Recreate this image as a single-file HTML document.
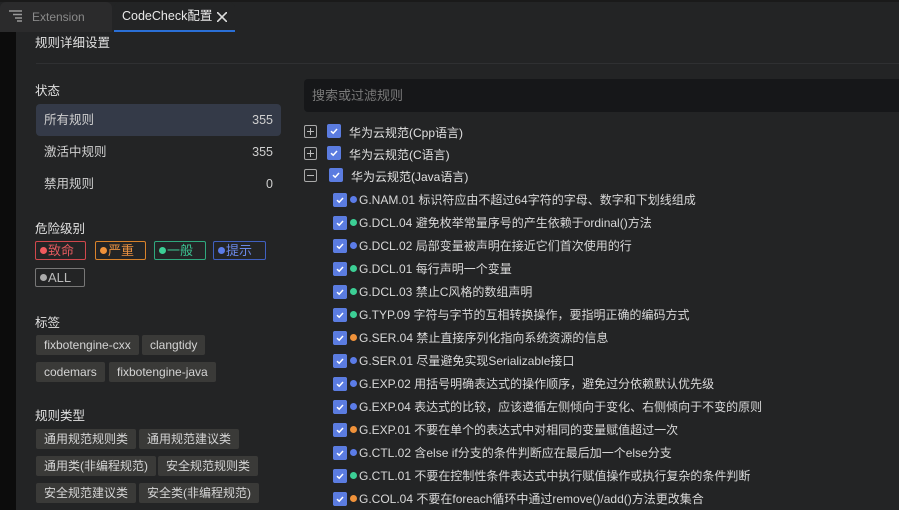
<!DOCTYPE html>
<html><head><meta charset="utf-8"><style>
*{box-sizing:border-box;margin:0;padding:0}
body{width:899px;height:510px;overflow:hidden;background:#232425;font-family:"Liberation Sans","Noto Sans CJK SC",sans-serif;color:#d4d4d4;position:relative}
.abs{position:absolute}
.tabbar{left:0;top:0;width:899px;height:33px;background:#232425;border-top:2px solid #1a1a1a}
.tab1{left:0;top:2px;width:112px;height:30px;background:#2b2b2c;border-radius:6px 6px 0 0;color:#8a8a8a;font-size:12px;line-height:30px;padding-left:32px}
.tab2{left:114px;top:2px;width:121px;height:30px;background:#232425;border-radius:6px 6px 0 0;color:#e8e8e8;font-size:12.5px;line-height:28px;padding-left:8px;border-bottom:2px solid #2a6fd6}
.strip{left:0;top:32px;width:16px;height:478px;background:#0c0c0c}
.sec{font-size:12.5px;color:#e0e0e0}
.item{left:36px;width:245px;height:32px;font-size:12.5px;line-height:32px;padding:0 8px;color:#cfcfcf}
.item span{float:right}
.sev{height:19px;border:1px solid;border-radius:2px;font-size:13px;line-height:17px;padding:0 4px;top:241px;white-space:nowrap}
.sev i{display:inline-block;width:7px;height:7px;border-radius:50%;margin-right:1px;vertical-align:1px}
.tag{height:20px;background:#3a3a38;border-radius:2px;font-size:12px;line-height:20px;padding:0 8px;color:#d4d4d4}
.cb{width:14px;height:14px;background:#5b7ce0;border-radius:2px;display:block}
.pm{width:13px;height:13px;border:1px solid #aaa;border-radius:2px}
.pm::before{content:"";position:absolute;left:2px;top:5px;width:7px;height:1px;background:#bbb}
.pm.p::after{content:"";position:absolute;left:5px;top:2px;width:1px;height:7px;background:#bbb}
.g{font-size:12px;color:#e0e0e0}
.r{font-size:12px;color:#d8d8d8;left:333px;height:18px;line-height:18px;white-space:nowrap}
.r .cb{display:inline-block;vertical-align:-3px}
.r .d{display:inline-block;width:7px;height:7px;border-radius:50%;margin:0 2px 0 3px;vertical-align:1px}
</style></head><body>
<svg width="0" height="0" style="position:absolute"><defs><symbol id="ck" viewBox="0 0 14 14"><rect width="14" height="14" rx="2" fill="#5b7ce0"/><path d="M4 7.2 L6.2 9.2 L10 5" fill="none" stroke="#fff" stroke-width="1.5"/></symbol></defs></svg>
<div class="abs tabbar"></div>
<div class="abs tab1">Extension</div>
<svg class="abs" style="left:9px;top:10px" width="14" height="12"><g stroke="#9a9a9a" stroke-width="1.5"><line x1="0" y1="1" x2="13" y2="1"/><line x1="4" y1="4.5" x2="13" y2="4.5"/><line x1="6" y1="8" x2="13" y2="8"/><line x1="8" y1="11" x2="13" y2="11"/></g></svg>
<div class="abs tab2">CodeCheck配置</div>
<svg class="abs" style="left:217px;top:12px" width="10" height="10"><g stroke="#ddd" stroke-width="1.6"><line x1="0" y1="0" x2="10" y2="10"/><line x1="10" y1="0" x2="0" y2="10"/></g></svg>
<div class="abs strip"></div>
<div class="abs sec" style="left:35px;top:32px">规则详细设置</div>
<div class="abs" style="left:36px;top:63px;width:863px;height:1px;background:#2f3032"></div>

<div class="abs sec" style="left:35px;top:80px">状态</div>
<div class="abs item" style="top:104px;background:#343a48;border-radius:4px">所有规则<span>355</span></div>
<div class="abs item" style="top:136px">激活中规则<span>355</span></div>
<div class="abs item" style="top:168px">禁用规则<span>0</span></div>

<div class="abs sec" style="left:35px;top:218px">危险级别</div>
<div class="abs sev" style="left:35px;width:51px;border-color:#d0484c;color:#e05a5e"><i style="background:#f05a5e"></i>致命</div>
<div class="abs sev" style="left:95px;width:51px;border-color:#d9822b;color:#e89040"><i style="background:#f0923a"></i>严重</div>
<div class="abs sev" style="left:154px;width:52px;border-color:#2fa87e;color:#3cc392"><i style="background:#3ccf95"></i>一般</div>
<div class="abs sev" style="left:213px;width:53px;border-color:#4060c0;color:#6a88e8"><i style="background:#5b7ce8"></i>提示</div>
<div class="abs sev" style="left:35px;top:268px;width:50px;border-color:#777;color:#bbb"><i style="background:#aaa"></i>ALL</div>

<div class="abs sec" style="left:35px;top:312px">标签</div>
<div class="abs tag" style="left:36px;top:335px">fixbotengine-cxx</div>
<div class="abs tag" style="left:142px;top:335px">clangtidy</div>
<div class="abs tag" style="left:36px;top:362px">codemars</div>
<div class="abs tag" style="left:109px;top:362px">fixbotengine-java</div>

<div class="abs sec" style="left:35px;top:405px">规则类型</div>
<div class="abs tag" style="left:36px;top:429px">通用规范规则类</div>
<div class="abs tag" style="left:139px;top:429px">通用规范建议类</div>
<div class="abs tag" style="left:36px;top:456px">通用类(非编程规范)</div>
<div class="abs tag" style="left:158px;top:456px">安全规范规则类</div>
<div class="abs tag" style="left:36px;top:483px">安全规范建议类</div>
<div class="abs tag" style="left:139px;top:483px">安全类(非编程规范)</div>

<div class="abs" style="left:304px;top:79px;width:595px;height:33px;background:#161719;border-radius:4px 0 0 4px;font-size:13px;color:#7a7a7a;line-height:33px;padding-left:8px">搜索或过滤规则</div>

<div class="abs pm p" style="left:304px;top:125px"></div><svg class="abs" style="left:327px;top:124px" width="14" height="14"><use href="#ck"/></svg><div class="abs g" style="left:349px;top:124px">华为云规范(Cpp语言)</div>
<div class="abs pm p" style="left:304px;top:147px"></div><svg class="abs" style="left:327px;top:146px" width="14" height="14"><use href="#ck"/></svg><div class="abs g" style="left:349px;top:146px">华为云规范(C语言)</div>
<div class="abs pm" style="left:304px;top:169px"></div><svg class="abs" style="left:329px;top:168px" width="14" height="14"><use href="#ck"/></svg><div class="abs g" style="left:351px;top:168px">华为云规范(Java语言)</div>

<div class="abs r" style="top:191px"><svg class="cb" width="14" height="14"><use href="#ck"/></svg><span class="d" style="background:#5b7ce8"></span>G.NAM.01 标识符应由不超过64字符的字母、数字和下划线组成</div>
<div class="abs r" style="top:214px"><svg class="cb" width="14" height="14"><use href="#ck"/></svg><span class="d" style="background:#3ccf95"></span>G.DCL.04 避免枚举常量序号的产生依赖于ordinal()方法</div>
<div class="abs r" style="top:237px"><svg class="cb" width="14" height="14"><use href="#ck"/></svg><span class="d" style="background:#5b7ce8"></span>G.DCL.02 局部变量被声明在接近它们首次使用的行</div>
<div class="abs r" style="top:260px"><svg class="cb" width="14" height="14"><use href="#ck"/></svg><span class="d" style="background:#3ccf95"></span>G.DCL.01 每行声明一个变量</div>
<div class="abs r" style="top:283px"><svg class="cb" width="14" height="14"><use href="#ck"/></svg><span class="d" style="background:#3ccf95"></span>G.DCL.03 禁止C风格的数组声明</div>
<div class="abs r" style="top:306px"><svg class="cb" width="14" height="14"><use href="#ck"/></svg><span class="d" style="background:#3ccf95"></span>G.TYP.09 字符与字节的互相转换操作，要指明正确的编码方式</div>
<div class="abs r" style="top:329px"><svg class="cb" width="14" height="14"><use href="#ck"/></svg><span class="d" style="background:#f0923a"></span>G.SER.04 禁止直接序列化指向系统资源的信息</div>
<div class="abs r" style="top:352px"><svg class="cb" width="14" height="14"><use href="#ck"/></svg><span class="d" style="background:#5b7ce8"></span>G.SER.01 尽量避免实现Serializable接口</div>
<div class="abs r" style="top:375px"><svg class="cb" width="14" height="14"><use href="#ck"/></svg><span class="d" style="background:#5b7ce8"></span>G.EXP.02 用括号明确表达式的操作顺序，避免过分依赖默认优先级</div>
<div class="abs r" style="top:398px"><svg class="cb" width="14" height="14"><use href="#ck"/></svg><span class="d" style="background:#5b7ce8"></span>G.EXP.04 表达式的比较，应该遵循左侧倾向于变化、右侧倾向于不变的原则</div>
<div class="abs r" style="top:421px"><svg class="cb" width="14" height="14"><use href="#ck"/></svg><span class="d" style="background:#f0923a"></span>G.EXP.01 不要在单个的表达式中对相同的变量赋值超过一次</div>
<div class="abs r" style="top:444px"><svg class="cb" width="14" height="14"><use href="#ck"/></svg><span class="d" style="background:#5b7ce8"></span>G.CTL.02 含else if分支的条件判断应在最后加一个else分支</div>
<div class="abs r" style="top:467px"><svg class="cb" width="14" height="14"><use href="#ck"/></svg><span class="d" style="background:#3ccf95"></span>G.CTL.01 不要在控制性条件表达式中执行赋值操作或执行复杂的条件判断</div>
<div class="abs r" style="top:490px"><svg class="cb" width="14" height="14"><use href="#ck"/></svg><span class="d" style="background:#f0923a"></span>G.COL.04 不要在foreach循环中通过remove()/add()方法更改集合</div>
</body></html>
